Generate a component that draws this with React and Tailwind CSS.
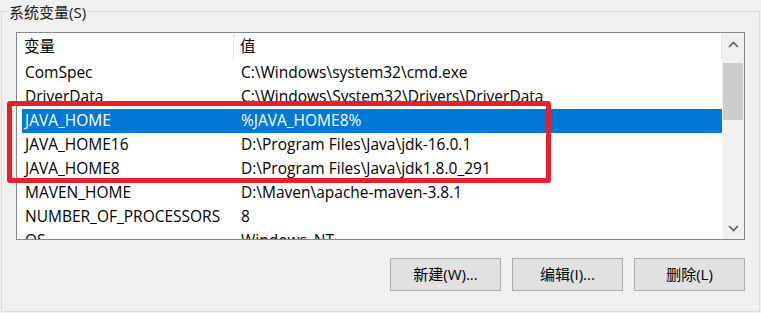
import React from 'react';

const rows = [
  { name: 'ComSpec', value: 'C:\\Windows\\system32\\cmd.exe' },
  { name: 'DriverData', value: 'C:\\Windows\\System32\\Drivers\\DriverData' },
  { name: 'JAVA_HOME', value: '%JAVA_HOME8%', selected: true },
  { name: 'JAVA_HOME16', value: 'D:\\Program Files\\Java\\jdk-16.0.1' },
  { name: 'JAVA_HOME8', value: 'D:\\Program Files\\Java\\jdk1.8.0_291' },
  { name: 'MAVEN_HOME', value: 'D:\\Maven\\apache-maven-3.8.1' },
  { name: 'NUMBER_OF_PROCESSORS', value: '8' },
  { name: 'OS', value: 'Windows_NT' },
];

const Chevron = ({ up }) => (
  <svg width="11" height="7" viewBox="0 0 11 7">
    <path
      d={up ? 'M1 6 L5.5 1.5 L10 6' : 'M1 1 L5.5 5.5 L10 1'}
      fill="none"
      stroke="#606060"
      strokeWidth="1.6"
    />
  </svg>
);

const Button = ({ children }) => (
  <button className="w-[111px] h-[33px] bg-[#e1e1e1] border border-[#adadad] text-[15px] text-black flex items-center justify-center">
    {children}
  </button>
);

export default function App() {
  return (
    <div
      className="relative w-[761px] h-[313px] bg-[#f0f0f0] overflow-hidden text-[15px] text-black"
      style={{ fontFamily: '"Open Sans", "Noto Sans CJK SC", sans-serif' }}
    >
      <div className="pt-[11px] pl-[1px]">
        <div className="relative w-[759px] h-[301px] border border-[#dcdcdc]">
          <span className="absolute left-[6px] top-[-10px] h-[20px] leading-[20px] pl-[1px] pr-[2px] bg-[#f0f0f0] text-[#1a1a1a]">
            系统变量(S)
          </span>

          <div className="ml-[14px] mt-[20px] w-[729px] h-[208px] border border-[#828790] bg-white flex">
            <div className="flex-1 flex flex-col overflow-hidden text-[15.5px]">
              <div className="h-[28px] shrink-0 flex items-center">
                <div className="w-[217px] h-[26px] pl-[7px] flex items-center border-r border-[#e5e5e5]">变量</div>
                <div className="flex-1 h-[26px] pl-[6px] flex items-center border-r border-[#e5e5e5]">值</div>
              </div>
              {rows.map((r) => (
                <div
                  key={r.name}
                  className={
                    'h-[24px] shrink-0 ml-[5px] flex items-center whitespace-nowrap ' +
                    (r.selected ? 'bg-[#0078d7] text-white' : '')
                  }
                >
                  <div className="w-[216px] pl-[3px]">{r.name}</div>
                  <div className="pl-[3px]">{r.value}</div>
                </div>
              ))}
            </div>
            <div className="w-[22px] bg-[#f0f0f0] flex flex-col">
              <div className="h-[22px] flex items-center justify-center">
                <Chevron up />
              </div>
              <div className="flex-1 flex flex-col px-[1px]">
                <div className="mt-[8px] h-[57px] bg-[#cdcdcd]" />
              </div>
              <div className="h-[22px] flex items-center justify-center">
                <Chevron />
              </div>
            </div>
          </div>

          <div className="mt-[18px] pr-[14px] flex justify-end gap-[11px]">
            <Button>新建(W)...</Button>
            <Button>编辑(I)...</Button>
            <Button>删除(L)</Button>
          </div>
        </div>
      </div>

      <div className="absolute left-[7px] top-[101px] w-[544px] h-[82px] border-[5px] border-[#e81e2b] rounded-[3px]" />
    </div>
  );
}
